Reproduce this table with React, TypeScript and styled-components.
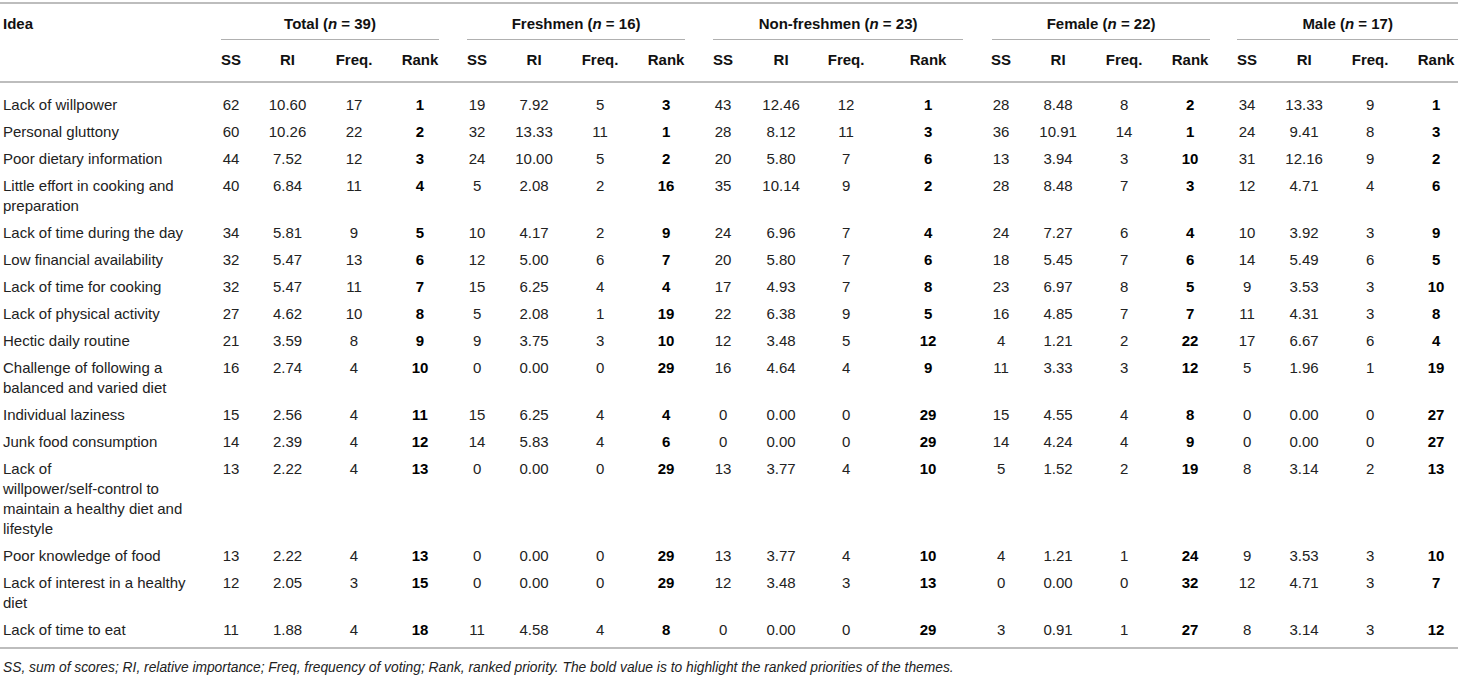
import React from "react";
import styled, { createGlobalStyle } from "styled-components";

const GlobalStyle = createGlobalStyle`
  html, body { margin: 0; padding: 0; background: #ffffff; }
  body { font-family: "Liberation Sans", Arial, Helvetica, sans-serif; color: #222; }
`;

const Page = styled.div`
  width: 1458px;
  padding-top: 2px;
`;

const Table = styled.table`
  width: 1458px;
  table-layout: fixed;
  border-collapse: separate;
  border-spacing: 0;
  border-top: 2px solid #bdbdbd;
  border-bottom: 2px solid #bdbdbd;
  font-size: 15px;
  line-height: 20px;
`;

const IdeaHead = styled.th`
  text-align: left;
  font-weight: bold;
  color: #111;
  padding: 10px 11px 6px 3px;
  vertical-align: top;
`;

const GroupCell = styled.th`
  padding: 10px 0 0 0;
  vertical-align: bottom;
`;

const GroupLabel = styled.div<{ $ml: number; $mr: number }>`
  margin: 0 ${(p) => p.$mr}px 0 ${(p) => p.$ml}px;
  padding-bottom: 5px;
  border-bottom: 1px solid #b0b0b0;
  text-align: center;
  font-weight: bold;
  color: #111;
  white-space: nowrap;
`;

const SubHead = styled.th<{ $pl?: number }>`
  padding: 10px 0 11px ${(p) => p.$pl ?? 0}px;
  border-bottom: 2px solid #bdbdbd;
  text-align: center;
  font-weight: bold;
  color: #111;
  white-space: nowrap;
`;

const Row = styled.tr`
  &:first-child td { padding-top: 12px; }
  &:last-child td { padding-bottom: 7px; }
`;

const IdeaCell = styled.td`
  padding: 3.5px 11px 3.5px 3px;
  vertical-align: top;
  text-align: left;
  color: #222;
`;

const NumCell = styled.td<{ $bold?: boolean; $pl?: number }>`
  padding: 3.5px 0 3.5px ${(p) => p.$pl ?? 0}px;
  vertical-align: top;
  text-align: center;
  white-space: nowrap;
  font-weight: ${(p) => (p.$bold ? "bold" : "normal")};
  color: ${(p) => (p.$bold ? "#000" : "#222")};
`;

const Caption = styled.p`
  margin: 10px 0 0 3px;
  font-size: 13.8px;
  line-height: 18px;
  font-style: italic;
  color: #222;
`;

type Stat = [number, string, number, number];
type DataRow = [string, Stat, Stat, Stat, Stat, Stat];

const colWidths = [
  203,
  56, 57, 76, 56,
  58, 56, 76, 56,
  58, 58, 72, 92,
  54, 60, 72, 60,
  54, 60, 72, 52,
];

const groups: { label: string; n: number; ml: number; mr: number }[] = [
  { label: "Total", n: 39, ml: 18, mr: 9 },
  { label: "Freshmen", n: 16, ml: 19, mr: 9 },
  { label: "Non-freshmen", n: 23, ml: 19, mr: 11 },
  { label: "Female", n: 22, ml: 18, mr: 10 },
  { label: "Male", n: 17, ml: 17, mr: 0 },
];

const rows: DataRow[] = [
  ["Lack of willpower", [62, "10.60", 17, 1], [19, "7.92", 5, 3], [43, "12.46", 12, 1], [28, "8.48", 8, 2], [34, "13.33", 9, 1]],
  ["Personal gluttony", [60, "10.26", 22, 2], [32, "13.33", 11, 1], [28, "8.12", 11, 3], [36, "10.91", 14, 1], [24, "9.41", 8, 3]],
  ["Poor dietary information", [44, "7.52", 12, 3], [24, "10.00", 5, 2], [20, "5.80", 7, 6], [13, "3.94", 3, 10], [31, "12.16", 9, 2]],
  ["Little effort in cooking and preparation", [40, "6.84", 11, 4], [5, "2.08", 2, 16], [35, "10.14", 9, 2], [28, "8.48", 7, 3], [12, "4.71", 4, 6]],
  ["Lack of time during the day", [34, "5.81", 9, 5], [10, "4.17", 2, 9], [24, "6.96", 7, 4], [24, "7.27", 6, 4], [10, "3.92", 3, 9]],
  ["Low financial availability", [32, "5.47", 13, 6], [12, "5.00", 6, 7], [20, "5.80", 7, 6], [18, "5.45", 7, 6], [14, "5.49", 6, 5]],
  ["Lack of time for cooking", [32, "5.47", 11, 7], [15, "6.25", 4, 4], [17, "4.93", 7, 8], [23, "6.97", 8, 5], [9, "3.53", 3, 10]],
  ["Lack of physical activity", [27, "4.62", 10, 8], [5, "2.08", 1, 19], [22, "6.38", 9, 5], [16, "4.85", 7, 7], [11, "4.31", 3, 8]],
  ["Hectic daily routine", [21, "3.59", 8, 9], [9, "3.75", 3, 10], [12, "3.48", 5, 12], [4, "1.21", 2, 22], [17, "6.67", 6, 4]],
  ["Challenge of following a balanced and varied diet", [16, "2.74", 4, 10], [0, "0.00", 0, 29], [16, "4.64", 4, 9], [11, "3.33", 3, 12], [5, "1.96", 1, 19]],
  ["Individual laziness", [15, "2.56", 4, 11], [15, "6.25", 4, 4], [0, "0.00", 0, 29], [15, "4.55", 4, 8], [0, "0.00", 0, 27]],
  ["Junk food consumption", [14, "2.39", 4, 12], [14, "5.83", 4, 6], [0, "0.00", 0, 29], [14, "4.24", 4, 9], [0, "0.00", 0, 27]],
  ["Lack of willpower/self-\u2060control to maintain a healthy diet and lifestyle", [13, "2.22", 4, 13], [0, "0.00", 0, 29], [13, "3.77", 4, 10], [5, "1.52", 2, 19], [8, "3.14", 2, 13]],
  ["Poor knowledge of food", [13, "2.22", 4, 13], [0, "0.00", 0, 29], [13, "3.77", 4, 10], [4, "1.21", 1, 24], [9, "3.53", 3, 10]],
  ["Lack of interest in a healthy diet", [12, "2.05", 3, 15], [0, "0.00", 0, 29], [12, "3.48", 3, 13], [0, "0.00", 0, 32], [12, "4.71", 3, 7]],
  ["Lack of time to eat", [11, "1.88", 4, 18], [11, "4.58", 4, 8], [0, "0.00", 0, 29], [3, "0.91", 1, 27], [8, "3.14", 3, 12]],
];

const subLabels = ["SS", "RI", "Freq.", "Rank"];

export default function App() {
  return (
    <Page>
      <GlobalStyle />
      <Table>
        <colgroup>
          {colWidths.map((w, i) => (
            <col key={i} style={{ width: `${w}px` }} />
          ))}
        </colgroup>
        <thead>
          <tr>
            <IdeaHead>Idea</IdeaHead>
            {groups.map((g) => (
              <GroupCell key={g.label} colSpan={4}>
                <GroupLabel $ml={g.ml} $mr={g.mr}>
                  {g.label} (<i>n</i> = {g.n})
                </GroupLabel>
              </GroupCell>
            ))}
          </tr>
          <tr>
            <SubHead />
            {groups.map((g, gi) =>
              subLabels.map((s, si) => (
                <SubHead key={`${g.label}-${s}`} $pl={gi === 4 && si === 3 ? 8 : 0}>
                  {s}
                </SubHead>
              ))
            )}
          </tr>
        </thead>
        <tbody>
          {rows.map(([idea, ...stats], ri) => (
            <Row key={ri}>
              <IdeaCell>{idea}</IdeaCell>
              {stats.map((st, gi) => (
                <React.Fragment key={gi}>
                  <NumCell>{st[0]}</NumCell>
                  <NumCell>{st[1]}</NumCell>
                  <NumCell>{st[2]}</NumCell>
                  <NumCell $bold $pl={gi === 4 ? 8 : 0}>
                    {st[3]}
                  </NumCell>
                </React.Fragment>
              ))}
            </Row>
          ))}
        </tbody>
      </Table>
      <Caption>
        SS, sum of scores; RI, relative importance; Freq, frequency of voting; Rank, ranked priority. The bold value is to
        highlight the ranked priorities of the themes.
      </Caption>
    </Page>
  );
}
